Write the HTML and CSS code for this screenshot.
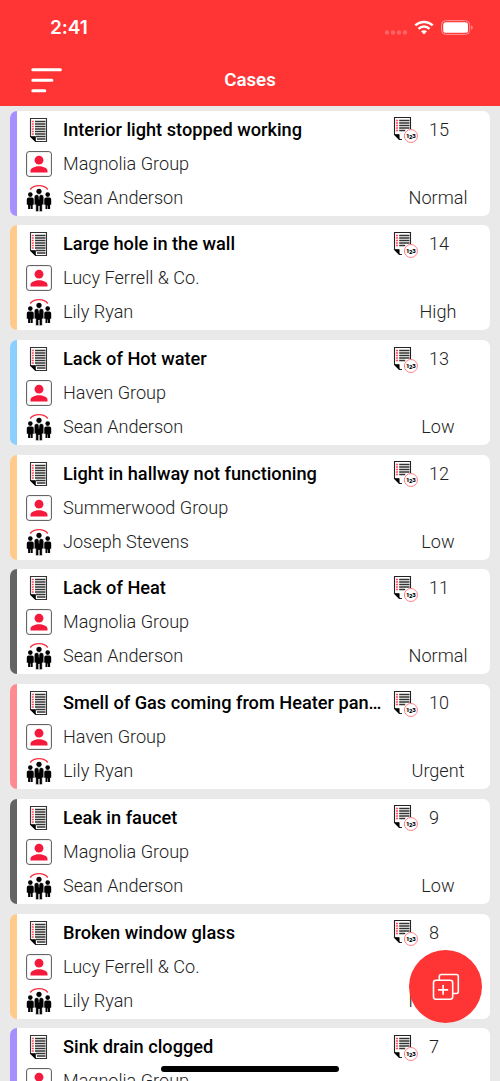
FILE: index.html
```html
<!DOCTYPE html>
<html lang="en">
<head>
<meta charset="utf-8">
<title>Cases</title>
<link rel="stylesheet" href="styles.css">
</head>
<body>
<svg class="defs" aria-hidden="true">
  <symbol id="doc" viewBox="0 0 26 26">
    <path d="M4.500 1.500h16v23H9.500L4.500 19.500z" fill="#fff" stroke="#333" stroke-width="1.100"/>
    <path d="M4.500 19.500h5v5z" fill="#000" stroke="#000" stroke-width=".6"/>
    <path d="M9 4.500h10.500M9 7h10.500M9 9.500h10.500M9 12h10.500M9 14.500h10.500M9 17h10.500M10 19.500h9.500M11 22h8.500" stroke="#333" stroke-width="1.300"/>
    <path d="M5.800 4.500h2M5.800 7h2M5.800 9.500h2M5.800 12h2M5.800 14.500h2M5.800 17h2" stroke="#ff4b5e" stroke-width="1.500"/>
  </symbol>
  <symbol id="person" viewBox="0 0 26 26">
    <rect x=".6" y=".6" width="24.800" height="24.800" rx="2.500" fill="#fff" stroke="#555" stroke-width="1"/>
    <circle cx="13" cy="9.200" r="4.400" fill="#f5193c"/>
    <path d="M4.500 21.400v-1.600c0-3 5-4.600 8.500-4.600s8.500 1.600 8.500 4.600v1.600z" fill="#f5193c"/>
  </symbol>
  <symbol id="team" viewBox="0 0 26 28">
    <path d="M4.200 5.500C8 .3 18 .3 21.800 5.500" fill="none" stroke="#f5303f" stroke-width="1.400"/>
    <g id="side">
      <circle cx="4.300" cy="10.600" r="2.300"/>
      <path d="M.8 15.200q0-1.700 1.900-1.700h3.200q1.900 0 1.900 1.700v5.600H6.700V25H4.600v-3.500h-.5V25H2.100v-4.200H.8z"/>
    </g>
    <use href="#side" x="17.400"/>
    <circle cx="13" cy="7.300" r="2.600"/>
    <path d="M8.300 13q0-2.300 2.200-2.300h5q2.200 0 2.200 2.300v7.800h-1.500v6.700h-2.800v-5.500h-.8v5.500H9.800v-6.700H8.300z" stroke="#fff" stroke-width=".4"/>
    <path d="M11.800 11h2.400L13 16z" fill="#fff"/>
    <path d="M12.600 11.500h.8l.3 2.500-.7 1.500-.7-1.500z"/>
  </symbol>
  <symbol id="number" viewBox="0 0 26 27">
    <path d="M1.500 18.500V1.500h16v15M1.500 18.500l5 5h2.500" fill="none" stroke="#222" stroke-width="1.100"/>
    <path d="M1.500 18.500h4.700v5z" fill="#000" stroke="#000" stroke-width=".6"/>
    <path d="M6.200 4.500h10.300M6.200 7h10.300M6.200 9.500h10.300M6.200 12h10.300M6.200 14.500h6" stroke="#333" stroke-width="1.300"/>
    <path d="M2.900 4.500h2.200M2.900 7h2.200M2.900 9.500h2.200M2.900 12h2.200M2.900 14.500h2.200" stroke="#ff4b5e" stroke-width="1.400"/>
    <circle cx="17.900" cy="20" r="6.500" fill="#fff" stroke="#ff7f88" stroke-width="1"/>
    <text x="14.800" y="21.900" class="digit">1</text>
    <text x="17.800" y="23.100" class="digit">2</text>
    <text x="21" y="21.900" class="digit">3</text>
  </symbol>
</svg>

<div class="app">
  <header class="header">
    <div class="status">
      <span class="time">2:41</span>
      <span class="indicators">
        <svg class="dots" viewBox="0 0 24 5"><circle cx="3" cy="2.500" r="2.200"/><circle cx="9" cy="2.500" r="2.200"/><circle cx="15" cy="2.500" r="2.200"/><circle cx="21" cy="2.500" r="2.200"/></svg>
        <svg class="wifi" viewBox="0 0 20 15"><path d="M1.300 5.400a12.500 12.500 0 0 1 17.400 0M4.500 8.800a8 8 0 0 1 11 0" fill="none" stroke="#fff" stroke-width="2.500"/><path d="M7 11.300q3-2 6 0L10 14.400z" fill="#fff"/></svg>
        <svg class="battery" viewBox="0 0 33 16"><rect x=".6" y=".6" width="28" height="13.800" rx="4" fill="none" stroke="#ff9595"/><rect x="2.200" y="2.200" width="24.800" height="10.600" rx="2.600" fill="#fff"/><path d="M30.200 5.200v4.600q1.500-.7 1.500-2.300t-1.500-2.300z" fill="#ff9595"/></svg>
      </span>
    </div>
    <div class="navbar">
      <svg class="menu" viewBox="0 0 32 26"><path d="M2.800 1.800h27.600M2.800 12.200h19.100M2.800 22.700h12" stroke="#fff" stroke-width="3" stroke-linecap="round"/></svg>
      <h1 class="title">Cases</h1>
    </div>
  </header>

  <main class="cases">
    <article class="card purple">
      <div class="details">
        <div class="row"><svg class="icon"><use href="#doc"/></svg><h2 class="subject">Interior light stopped working</h2></div>
        <div class="row"><svg class="icon"><use href="#person"/></svg><span class="name">Magnolia Group</span></div>
        <div class="row"><svg class="icon team"><use href="#team"/></svg><span class="name">Sean Anderson</span></div>
      </div>
      <div class="meta"><div class="case-number"><svg class="number-icon"><use href="#number"/></svg>15</div><span class="priority">Normal</span></div>
    </article>
    <article class="card orange">
      <div class="details">
        <div class="row"><svg class="icon"><use href="#doc"/></svg><h2 class="subject">Large hole in the wall</h2></div>
        <div class="row"><svg class="icon"><use href="#person"/></svg><span class="name">Lucy Ferrell &amp; Co.</span></div>
        <div class="row"><svg class="icon team"><use href="#team"/></svg><span class="name">Lily Ryan</span></div>
      </div>
      <div class="meta"><div class="case-number"><svg class="number-icon"><use href="#number"/></svg>14</div><span class="priority">High</span></div>
    </article>
    <article class="card blue">
      <div class="details">
        <div class="row"><svg class="icon"><use href="#doc"/></svg><h2 class="subject">Lack of Hot water</h2></div>
        <div class="row"><svg class="icon"><use href="#person"/></svg><span class="name">Haven Group</span></div>
        <div class="row"><svg class="icon team"><use href="#team"/></svg><span class="name">Sean Anderson</span></div>
      </div>
      <div class="meta"><div class="case-number"><svg class="number-icon"><use href="#number"/></svg>13</div><span class="priority">Low</span></div>
    </article>
    <article class="card orange">
      <div class="details">
        <div class="row"><svg class="icon"><use href="#doc"/></svg><h2 class="subject">Light in hallway not functioning</h2></div>
        <div class="row"><svg class="icon"><use href="#person"/></svg><span class="name">Summerwood Group</span></div>
        <div class="row"><svg class="icon team"><use href="#team"/></svg><span class="name">Joseph Stevens</span></div>
      </div>
      <div class="meta"><div class="case-number"><svg class="number-icon"><use href="#number"/></svg>12</div><span class="priority">Low</span></div>
    </article>
    <article class="card gray">
      <div class="details">
        <div class="row"><svg class="icon"><use href="#doc"/></svg><h2 class="subject">Lack of Heat</h2></div>
        <div class="row"><svg class="icon"><use href="#person"/></svg><span class="name">Magnolia Group</span></div>
        <div class="row"><svg class="icon team"><use href="#team"/></svg><span class="name">Sean Anderson</span></div>
      </div>
      <div class="meta"><div class="case-number"><svg class="number-icon"><use href="#number"/></svg>11</div><span class="priority">Normal</span></div>
    </article>
    <article class="card pink">
      <div class="details">
        <div class="row"><svg class="icon"><use href="#doc"/></svg><h2 class="subject">Smell of Gas coming from Heater pan…</h2></div>
        <div class="row"><svg class="icon"><use href="#person"/></svg><span class="name">Haven Group</span></div>
        <div class="row"><svg class="icon team"><use href="#team"/></svg><span class="name">Lily Ryan</span></div>
      </div>
      <div class="meta"><div class="case-number"><svg class="number-icon"><use href="#number"/></svg>10</div><span class="priority">Urgent</span></div>
    </article>
    <article class="card gray">
      <div class="details">
        <div class="row"><svg class="icon"><use href="#doc"/></svg><h2 class="subject">Leak in faucet</h2></div>
        <div class="row"><svg class="icon"><use href="#person"/></svg><span class="name">Magnolia Group</span></div>
        <div class="row"><svg class="icon team"><use href="#team"/></svg><span class="name">Sean Anderson</span></div>
      </div>
      <div class="meta"><div class="case-number"><svg class="number-icon"><use href="#number"/></svg>9</div><span class="priority">Low</span></div>
    </article>
    <article class="card orange">
      <div class="details">
        <div class="row"><svg class="icon"><use href="#doc"/></svg><h2 class="subject">Broken window glass</h2></div>
        <div class="row"><svg class="icon"><use href="#person"/></svg><span class="name">Lucy Ferrell &amp; Co.</span></div>
        <div class="row"><svg class="icon team"><use href="#team"/></svg><span class="name">Lily Ryan</span></div>
      </div>
      <div class="meta"><div class="case-number"><svg class="number-icon"><use href="#number"/></svg>8</div><span class="priority">Normal</span></div>
    </article>
    <article class="card purple">
      <div class="details">
        <div class="row"><svg class="icon"><use href="#doc"/></svg><h2 class="subject">Sink drain clogged</h2></div>
        <div class="row"><svg class="icon"><use href="#person"/></svg><span class="name">Magnolia Group</span></div>
      </div>
      <div class="meta"><div class="case-number"><svg class="number-icon"><use href="#number"/></svg>7</div></div>
    </article>
  </main>

  <button class="add" aria-label="Add case">
    <svg viewBox="0 0 28 28" fill="none" stroke="#fff" stroke-width="1.600" stroke-linecap="round" stroke-linejoin="round"><path d="M7.300 7V3.500q0-2 2-2h15q2 0 2 2v15q0 2-2 2h-3.500"/><rect x="1.500" y="7.300" width="19.200" height="19" rx="2.500"/><path d="M11.100 12.500v8.800M6.700 16.900h8.800"/></svg>
  </button>
  <div class="home-indicator"></div>
</div>
</body>
</html>
```
FILE: styles.css
```css
* { box-sizing: border-box; }
body { margin: 0; font-family: Roboto, sans-serif; }
.defs { position: absolute; width: 0; height: 0; }

.app {
  position: relative;
  width: 500px;
  height: 1081px;
  overflow: hidden;
  background: #e9e9e9;
}

.header { height: 106px; background: #ff3535; color: #fff; }
.status {
  display: flex;
  justify-content: space-between;
  height: 55px;
  padding: 0 26px 0 50px;
}
.time { font: 600 19px/55px Inter, sans-serif; letter-spacing: -.1px; }
.indicators { display: flex; align-items: center; }
.dots { width: 24px; height: 5px; margin-top: 9px; fill: #ff6464; }
.wifi { width: 20px; height: 15px; margin: 0 7px 0 6px; }
.battery { width: 33px; height: 16px; margin-top: 1px; }
.navbar {
  display: grid;
  grid-template-columns: 40px 1fr 40px;
  align-items: center;
  height: 51px;
  padding: 0 30px;
}
.menu { width: 32px; height: 26px; }
.title { margin: 0; font-size: 18.700px; font-weight: 600; line-height: 51px; text-align: center; }

.cases {
  display: flex;
  flex-direction: column;
  gap: 9.700px;
  padding: 4.700px 10px 0;
}
.card {
  display: flex;
  flex: none;
  height: 105px;
  padding-top: 2px;
  border-left: 7px solid;
  border-radius: 7px;
  background: #fff;
}
.purple { border-color: #a78fff; }
.orange { border-color: #ffca8a; }
.blue { border-color: #8acfff; }
.gray { border-color: #646464; }
.pink { border-color: #ff8a90; }

.details { width: 376px; padding-left: 9px; }
.row { display: flex; align-items: center; gap: 11px; height: 34px; }
.icon { flex: none; width: 26px; height: 26px; }
.icon.team { height: 28px; }
.subject, .name { margin: 0; font-size: 18.100px; line-height: 34px; white-space: nowrap; }
.subject { color: #000; font-weight: 500; font-size: 18.200px; }
.name, .case-number, .priority { color: #222; font-weight: 300; }

.meta { display: flex; flex-direction: column; width: 90px; font-size: 18.100px; line-height: 34px; }
.case-number { display: flex; align-items: center; gap: 10px; height: 68px; padding-bottom: 34px; }
.number-icon { flex: none; width: 26px; height: 27px; }
.priority { text-align: center; }
.digit { font: 900 6px Roboto, sans-serif; text-anchor: middle; }

.add {
  position: absolute;
  right: 18px;
  bottom: 58px;
  display: flex;
  align-items: center;
  justify-content: center;
  width: 73px;
  height: 73px;
  padding: 0;
  border: 0;
  border-radius: 50%;
  background: #ff3535;
}
.add svg { width: 28px; height: 28px; }
.home-indicator {
  position: absolute;
  bottom: 9px;
  left: 161px;
  width: 178px;
  height: 6px;
  border-radius: 3px;
  background: #000;
}
```
